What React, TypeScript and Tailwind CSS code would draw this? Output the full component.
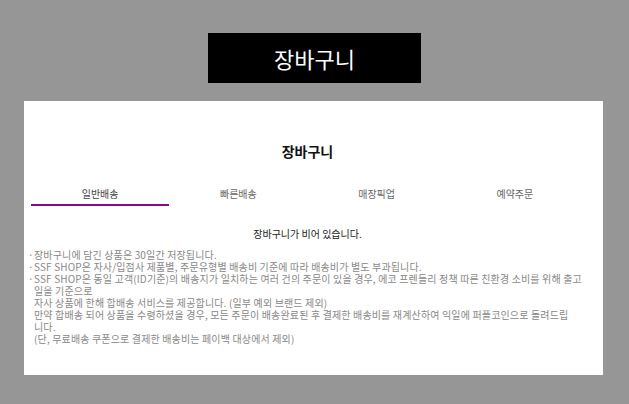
import React from 'react';

const tabs = ['일반배송', '빠른배송', '매장픽업', '예약주문'];

const font = { fontFamily: '"Noto Sans CJK KR", "Noto Sans", sans-serif' };

const App = () => {
  return (
    <div className="w-[629px] h-[404px] bg-[#969696] pt-[33px] overflow-hidden" style={font}>
      {/* Top title box */}
      <div className="mx-auto w-[213px] h-[50px] bg-black flex items-center justify-center">
        <span className="text-white text-[22px] leading-none">장바구니</span>
      </div>

      {/* Cart panel */}
      <div className="ml-[24px] mt-[18px] w-[579px] h-[274px] bg-white pl-[7px] pt-[38px]">
        <div className="w-[553px]">
          <h2 className="text-center text-[14px] font-bold text-[#111] leading-[24px]">장바구니</h2>

          {/* Tabs */}
          <div className="mt-[21px] grid grid-cols-4">
            {tabs.map((tab, i) => (
              <div
                key={tab}
                className={`h-[22px] text-center text-[10px] leading-[20px] ${
                  i === 0 ? 'text-[#444] border-b-2 border-[#8b078b]' : 'text-[#666]'
                }`}
              >
                {tab}
              </div>
            ))}
          </div>

          <p className="mt-[20px] text-center text-[10px] text-[#222] leading-[16px]">장바구니가 비어 있습니다.</p>

          {/* Notices */}
          <ul className="mt-[7px] -ml-[3px] text-[10px] tracking-[0.15px] text-[#888] leading-[12px] w-[556px]">
            <li className="relative pl-[6px]">
              <span className="absolute left-0">·</span>장바구니에 담긴 상품은 30일간 저장됩니다.
            </li>
            <li className="relative pl-[6px]">
              <span className="absolute left-0">·</span>SSF SHOP은 자사/입점사 제품별, 주문유형별 배송비 기준에 따라 배송비가 별도 부과됩니다.
            </li>
            <li className="relative pl-[6px]">
              <span className="absolute left-0">·</span>SSF SHOP은 동일 고객(ID기준)의 배송지가 일치하는 여러 건의 주문이 있을 경우, 에코 프렌들리 정책 따른 친환경 소비를 위해 출고일을 기준으로
              <br />
              자사 상품에 한해 합배송 서비스를 제공합니다. (일부 예외 브랜드 제외)
              <br />
              만약 합배송 되어 상품을 수령하셨을 경우, 모든 주문이 배송완료된 후 결제한 배송비를 재계산하여 익일에 퍼플코인으로 돌려드립
              <br />
              니다.
              <br />
              (단, 무료배송 쿠폰으로 결제한 배송비는 페이백 대상에서 제외)
            </li>
          </ul>
        </div>
      </div>
    </div>
  );
};

export default App;
